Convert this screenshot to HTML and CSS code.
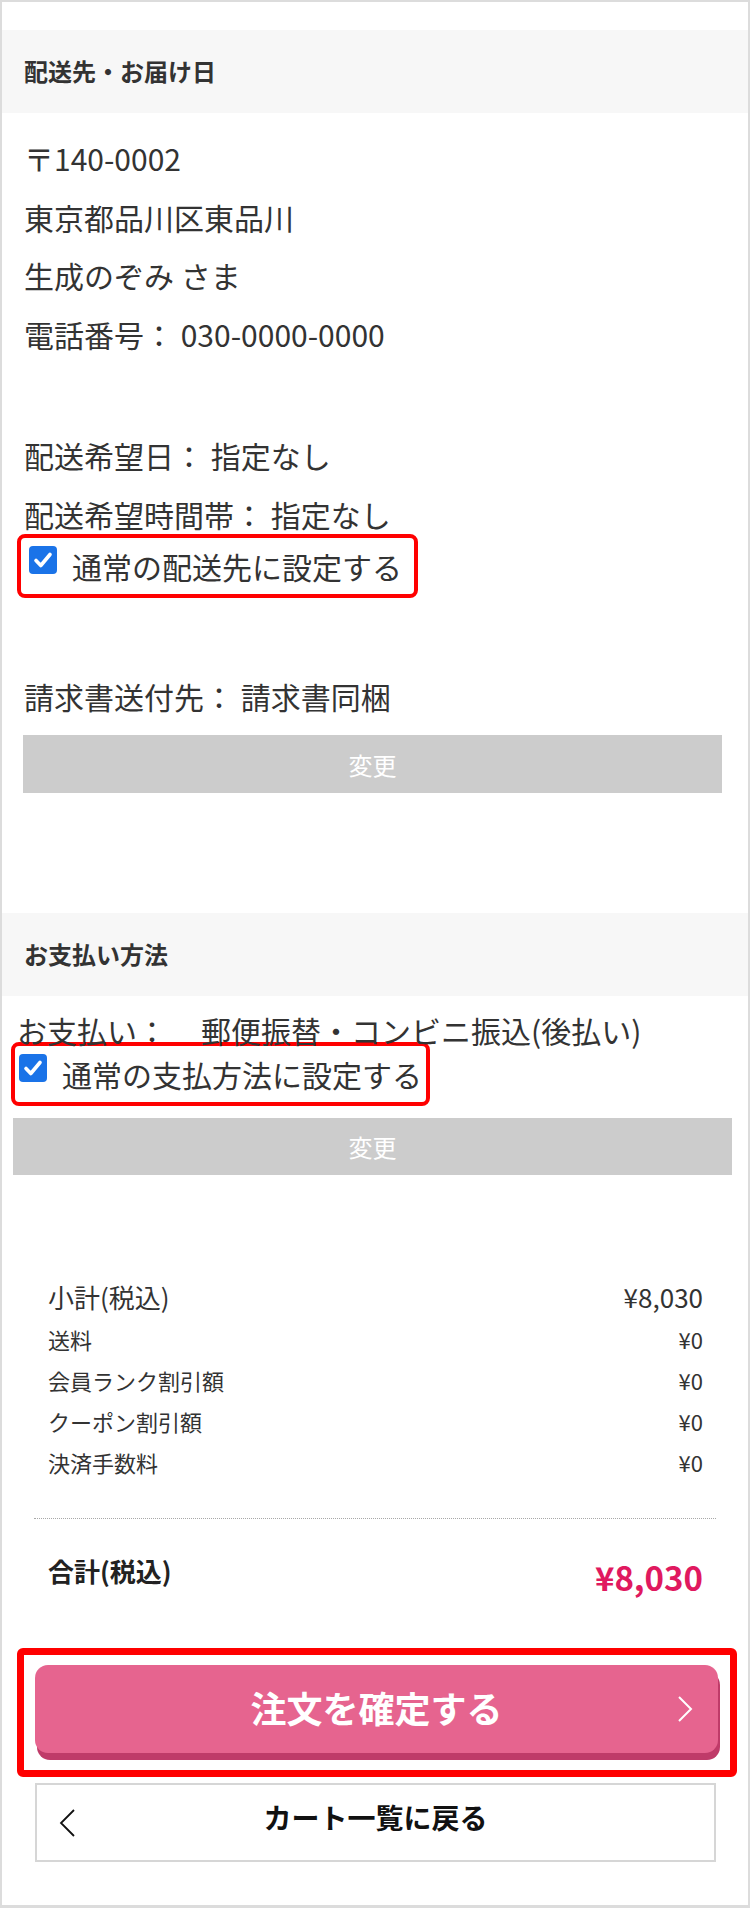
FILE: index.html
```html
<!DOCTYPE html>
<html lang="ja">
<head>
  <meta charset="UTF-8">
  <meta name="viewport" content="width=device-width, initial-scale=1.0">
  <title>ご注文内容の確認</title>
  <link rel="stylesheet" href="styles.css">
</head>
<body>
  <div class="page">

    <!-- 配送先・お届け日 -->
    <section class="block">
      <h2 class="block-title">配送先・お届け日</h2>
      <div class="info address">
        <p>〒140-0002</p>
        <p>東京都品川区東品川</p>
        <p>生成のぞみ さま</p>
        <p>電話番号： 030-0000-0000</p>
      </div>
      <div class="info delivery">
        <p>配送希望日： 指定なし</p>
        <p>配送希望時間帯： 指定なし</p>
      </div>
      <label class="check check-delivery">
        <span class="check-box">
          <svg width="28" height="28" viewBox="0 0 28 28"><rect width="28" height="28" rx="4" fill="#1a73e8"/><path d="M7 14.5 L11.8 19.5 L21 8.5" fill="none" stroke="#fff" stroke-width="3.6" stroke-linecap="round" stroke-linejoin="round"/></svg>
        </span>
        <span>通常の配送先に設定する</span>
      </label>
      <p class="info invoice">請求書送付先： 請求書同梱</p>
      <button class="change-btn change-delivery">変更</button>
    </section>

    <!-- お支払い方法 -->
    <section class="block payment">
      <h2 class="block-title">お支払い方法</h2>
      <p class="pay-line">お支払い：<span class="pay-value">郵便振替・コンビニ振込(後払い)</span></p>
      <label class="check check-payment">
        <span class="check-box">
          <svg width="28" height="28" viewBox="0 0 28 28"><rect width="28" height="28" rx="4" fill="#1a73e8"/><path d="M7 14.5 L11.8 19.5 L21 8.5" fill="none" stroke="#fff" stroke-width="3.6" stroke-linecap="round" stroke-linejoin="round"/></svg>
        </span>
        <span>通常の支払方法に設定する</span>
      </label>
      <button class="change-btn change-payment">変更</button>
    </section>

    <!-- 金額 -->
    <div class="summary">
      <div class="row row-main"><span>小計(税込)</span><span>¥8,030</span></div>
      <div class="row row-sub first"><span>送料</span><span>¥0</span></div>
      <div class="row row-sub"><span>会員ランク割引額</span><span>¥0</span></div>
      <div class="row row-sub"><span>クーポン割引額</span><span>¥0</span></div>
      <div class="row row-sub"><span>決済手数料</span><span>¥0</span></div>
      <div class="row total">
        <span class="total-label">合計(税込)</span>
        <span class="total-price">¥8,030</span>
      </div>
    </div>

    <div class="confirm-wrap">
      <button class="confirm-btn">
        <span></span>
        <span class="confirm-text">注文を確定する</span>
        <svg class="arrow-right" width="16" height="28" viewBox="0 0 16 28"><polyline points="2,2 14,14 2,26" fill="none" stroke="#fff" stroke-width="2"/></svg>
      </button>
    </div>

    <a class="back-btn" href="#">
      <svg class="arrow-left" width="16" height="28" viewBox="0 0 16 28"><polyline points="15,1 2,14 15,27" fill="none" stroke="#111" stroke-width="1.8"/></svg>
      <span class="back-text">カート一覧に戻る</span>
      <span></span>
    </a>

  </div>
</body>
</html>
```

FILE: styles.css
```css
/* ページ全体 */
body {
  margin: 0;
  font-family: "Noto Sans CJK JP", "Noto Sans", sans-serif;
  color: #333;
  background: #fff;
}

.page {
  width: 750px;
  min-height: 1908px;
  box-sizing: border-box;
  border: 2px solid #dcdcdc;
  border-bottom-width: 3px;
  padding-top: 28px;
}

p {
  margin: 0;
}

/* 見出し帯 */
.block-title {
  margin: 0;
  height: 83px;
  box-sizing: border-box;
  display: flex;
  align-items: center;
  padding: 0 0 3px 22px;
  background: #f7f7f7;
  font-size: 24px;
  font-weight: 700;
  color: #333;
}

/* 住所・配送情報 */
.info {
  display: flex;
  flex-direction: column;
  gap: 18.7px;
  padding: 0 22px;
  font-size: 30px;
  line-height: 40px;
}

.address {
  padding-top: 25px;
}

.delivery {
  margin-top: 81px;
  gap: 19px;
}

.invoice {
  margin-top: 78px;
}

/* チェックボックス（赤枠） */
.check {
  display: flex;
  align-items: center;
  width: fit-content;
  height: 64px;
  box-sizing: border-box;
  border: 4px solid #ff0000;
  border-radius: 8px;
  font-size: 30px;
  color: #333;
}

.check-box {
  display: flex;
  margin: 0 15px 12px 0;
}

.check-delivery {
  margin-left: 15px;
  padding: 0 12px 0 8px;
}

.check-payment {
  margin: -3px 0 0 9px;
  padding: 0 4px 0 4px;
}

/* 変更ボタン */
.change-btn {
  display: block;
  height: 58px;
  border: none;
  background: #cccccc;
  color: #fff;
  font-family: inherit;
  font-size: 24px;
  cursor: pointer;
}

.change-delivery {
  width: 699px;
  margin: 19px 0 0 21px;
}

.change-payment {
  width: 719px;
  height: 57px;
  margin: 12px 0 0 11px;
}

/* お支払い方法 */
.payment {
  margin-top: 120px;
}

.pay-line {
  margin: 19px 0 0 15px;
  font-size: 30px;
  line-height: 30px;
}

.pay-value {
  margin-left: 34px;
}

/* 金額 */
.summary {
  margin: 102px 32px 0 32px;
}

.row {
  display: flex;
  justify-content: space-between;
  padding: 0 13px 0 14px;
}

.row-main {
  font-size: 26px;
  line-height: 40px;
}

.row-sub {
  font-size: 22px;
  line-height: 41px;
}

.row-sub.first {
  margin-top: 2px;
}

.total {
  align-items: flex-start;
  margin-top: 35px;
  padding-top: 32px;
  border-top: 1px dotted #a8a8a8;
}

.total-label {
  font-size: 26px;
  line-height: 40px;
  font-weight: 700;
  color: #222;
}

.total-price {
  margin-top: 3px;
  font-size: 33px;
  line-height: 46px;
  font-weight: 700;
  color: #e0195f;
}

/* 注文確定ボタン */
.confirm-wrap {
  margin: 48px 11px 0 15px;
  padding: 10px 12px 17px 11px;
  border: 7px solid #ff0000;
  border-radius: 6px;
}

.confirm-btn {
  display: grid;
  grid-template-columns: 1fr auto 1fr;
  align-items: center;
  width: 100%;
  height: 88px;
  padding: 0 0 4px;
  border: none;
  border-radius: 13px;
  background: #e6648f;
  box-shadow: 2px 7px 0 #bf3b69;
  color: #fff;
  font-family: inherit;
  cursor: pointer;
}

.confirm-text {
  font-size: 36px;
  font-weight: 700;
}

.arrow-right {
  justify-self: end;
  margin: 4px 25px 0 0;
}

/* カート一覧に戻る */
.back-btn {
  display: grid;
  grid-template-columns: 1fr auto 1fr;
  align-items: center;
  height: 79px;
  box-sizing: border-box;
  margin: 6px 32px 0 33px;
  padding-bottom: 12px;
  border: 2px solid #d6d6d6;
  color: #111;
  text-decoration: none;
}

.arrow-left {
  justify-self: start;
  margin: 12px 0 0 22px;
}

.back-text {
  font-size: 28px;
  font-weight: 700;
}
```
